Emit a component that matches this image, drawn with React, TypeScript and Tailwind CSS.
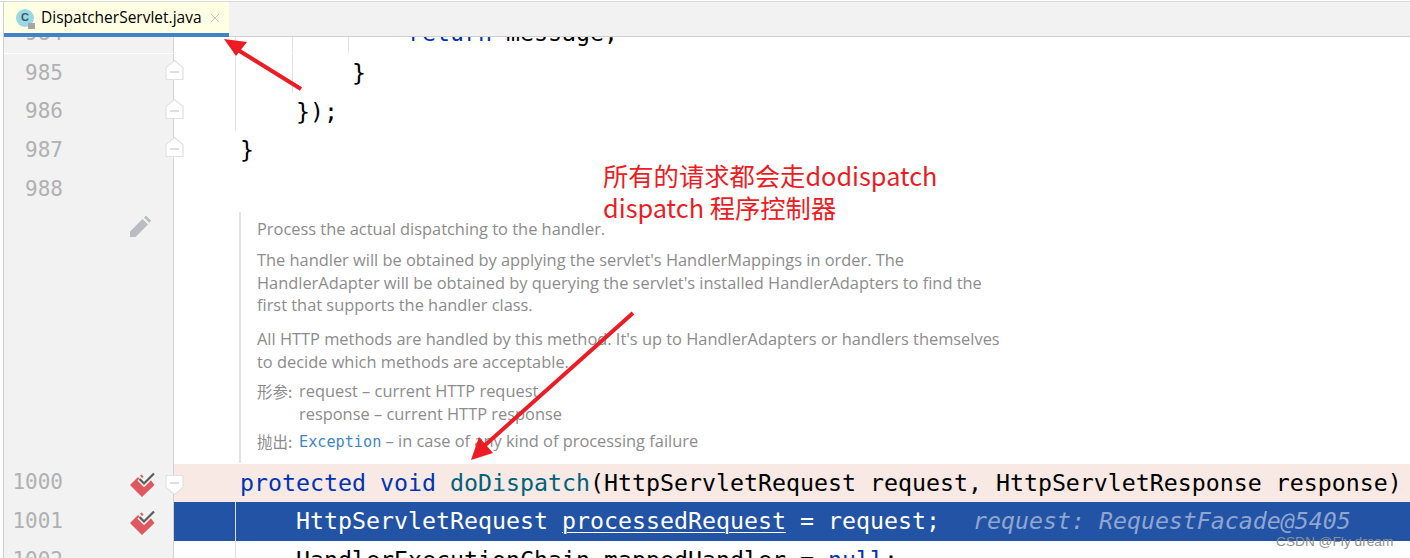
import React from 'react';

const mono = "font-['DejaVu_Sans_Mono',monospace]";

function FoldIcon({ up = true }: { up?: boolean }) {
  return (
    <svg width="19" height="22" viewBox="0 0 19 22" className={`absolute left-[161px] z-10 ${up ? 'top-[5px]' : 'top-[10px]'}`}>
      {up ? (
        <path d="M1 20.5V8.5L9.5 1.5L18 8.5V20.5Z" fill="#ffffff" stroke="#e2e2e2" strokeWidth="1.2" />
      ) : (
        <path d="M1 1.5V13.5L9.5 20.5L18 13.5V1.5Z" fill="#ffffff" stroke="#e2e2e2" strokeWidth="1.2" />
      )}
      <path d={up ? 'M5 13H14' : 'M5 9H14'} stroke="#c9c9c9" strokeWidth="1.2" />
    </svg>
  );
}

function BreakIcon() {
  return (
    <svg width="25" height="25" viewBox="0 0 25 25" className="absolute left-[126px] top-[8px] z-10">
      <path d="M0 13L8 5L14.5 11.5L20 7L24.5 13L12 25Z" fill="#e0585f" />
      <path d="M10 3.5L12 2.5L13.5 5L12 6Z" fill="#e0585f" />
      <path d="M9 7L14 12L24 2" fill="none" stroke="#f2f2f2" strokeWidth="4.5" />
      <path d="M9.5 7L14 11.5L24 1.5" fill="none" stroke="#5c5c5c" strokeWidth="2.2" />
    </svg>
  );
}

function Row({
  num,
  bg = '',
  gutterIcon,
  guides = [],
  children,
}: {
  num?: string;
  bg?: string;
  gutterIcon?: React.ReactNode;
  guides?: number[];
  children?: React.ReactNode;
}) {
  return (
    <div className="relative flex h-[38.6px]">
      <div className="flex w-[170px] shrink-0 items-center bg-[#f2f2f2] border-r border-[#d0d0d0]">
        <span className={`${mono} w-[59px] text-right text-[21px] text-[#b1b1b1]`}>{num}</span>
      </div>
      {gutterIcon}
      <div className={`relative flex flex-1 items-center pl-[66px] whitespace-pre ${mono} text-[23.25px] text-black ${bg}`}>
        {guides.map((g) => (
          <div key={g} className="absolute top-0 bottom-0 w-px bg-[#e3e3e3]" style={{ left: g }} />
        ))}
        {children}
      </div>
    </div>
  );
}

export default function App() {
  return (
    <div className="relative h-[558px] w-[1410px] overflow-hidden bg-white">
      {/* outer window edge */}
      <div className="h-[2px] bg-white border-b border-[#d8d8d8]" />
      <div className="flex h-[556px] flex-col border-l border-[#d0d0d0] ml-[3px]">
        {/* tab bar */}
        <div className="flex h-[35px] shrink-0 bg-[#f2f2f2] border-b border-[#d0d0d0]">
          <div className="flex h-[35px] w-[225px] items-center border-b-[4px] border-[#4083c9] bg-[#ffffe4] pl-[12px]">
            <div className="relative flex h-[18px] w-[18px] items-center justify-center rounded-full bg-[#9ad8e4] font-['Liberation_Sans',sans-serif] text-[11px] font-bold text-[#3c5a62]">
              C
              <div className="absolute bottom-[-2px] right-[-1px] h-[6px] w-[7px] bg-[#a6a6a6]" />
            </div>
            <span className="ml-[7px] font-['Open_Sans',sans-serif] text-[15.5px] text-black">DispatcherServlet.java</span>
            <svg width="10" height="10" viewBox="0 0 10 10" className="ml-[8px]">
              <path d="M1 1L9 9M9 1L1 9" stroke="#c4c4c4" strokeWidth="1" />
            </svg>
          </div>
        </div>

        {/* editor */}
        <div className="flex flex-col">
          <div className="h-[17.3px] overflow-hidden">
            <div className="-mt-[23px]">
              <Row num="984" guides={[61, 118, 174]}>
                <span className="text-[#0033b3]">{'            return '}</span>
                <span>message;</span>
              </Row>
            </div>
          </div>
          <Row num="985" gutterIcon={<FoldIcon />} guides={[61, 118]}>
            {'        }'}
          </Row>
          <Row num="986" gutterIcon={<FoldIcon />} guides={[61]}>
            {'    });'}
          </Row>
          <Row num="987" gutterIcon={<FoldIcon />}>
            {'}'}
          </Row>
          <Row num="988" />

          {/* rendered doc comment */}
          <div className="relative flex h-[255.2px]">
            <div className="flex w-[170px] shrink-0 justify-end bg-[#f2f2f2] border-r border-[#d0d0d0] pt-[6px] pr-[21px]">
              <svg width="23" height="23" viewBox="0 0 23 23">
                <path d="M1 22V16.5L13.5 4L19 9.5L6.5 22Z M15 2.5L17 0.8L22 5.5L20.3 8Z" fill="#b9bdc1" />
              </svg>
            </div>
            <div className="flex-1 pl-[65px] pt-[3px]">
              <div className="h-[251px] border-l-[2px] border-[#e3e3e3] pl-[16px] font-['Open_Sans',sans-serif] text-[16.4px] leading-[22.6px] text-[#8c8c8c] whitespace-nowrap">
                <p className="pt-[6px]">Process the actual dispatching to the handler.</p>
                <p className="mt-[9px]">
                  The handler will be obtained by applying the servlet's HandlerMappings in order. The
                  <br />
                  HandlerAdapter will be obtained by querying the servlet's installed HandlerAdapters to find the
                  <br />
                  first that supports the handler class.
                </p>
                <p className="mt-[11px]">
                  All HTTP methods are handled by this method. It's up to HandlerAdapters or handlers themselves
                  <br />
                  to decide which methods are acceptable.
                </p>
                <div className="mt-[7px] flex">
                  <span className="w-[42px] font-['Noto_Sans_CJK_SC',sans-serif] text-[15.5px]">形参:</span>
                  <div>
                    request – current HTTP request
                    <br />
                    response – current HTTP response
                  </div>
                </div>
                <div className="mt-[5px] flex">
                  <span className="w-[42px] font-['Noto_Sans_CJK_SC',sans-serif] text-[15.5px]">抛出:</span>
                  <span>
                    <span className={`${mono} text-[15.2px] text-[#3f86c7]`}>Exception</span> – in case of any kind of processing failure
                  </span>
                </div>
              </div>
            </div>
          </div>

          <Row num="1000" bg="bg-[#f8e9e5]" gutterIcon={<><BreakIcon /><FoldIcon up={false} /></>}>
            <span className="text-[#0033b3]">protected void </span>
            <span className="text-[#00627a]">doDispatch</span>
            <span>(HttpServletRequest request, HttpServletResponse response)</span>
          </Row>
          <Row num="1001" bg="bg-[#2253a5]" gutterIcon={<BreakIcon />}>
            <div className="absolute top-0 bottom-0 left-[61px] w-px bg-white/80" />
            <span className="text-white">
              {'    HttpServletRequest '}
              <span className="underline decoration-1 underline-offset-[3px]">processedRequest</span>
              {' = request;'}
            </span>
            <span className="ml-[33px] italic text-[#8fa6d1]">request: RequestFacade@5405</span>
          </Row>
          <Row num="1002" guides={[61]}>
            <span>
              {'    HandlerExecutionChain '}
              <span className="underline decoration-1 underline-offset-[3px]">mappedHandler</span>
              {' = '}
              <span className="text-[#0033b3]">null</span>;
            </span>
          </Row>
        </div>
      </div>

      {/* screenshot annotations */}
      <svg width="1410" height="558" viewBox="0 0 1410 558" className="absolute inset-0 z-20 pointer-events-none">
        <path d="M301 89L238 50" stroke="#ed1c24" strokeWidth="4" />
        <path d="M224 39L247 42L236 56Z" fill="#ed1c24" />
        <path d="M633 313L483 447" stroke="#ed1c24" strokeWidth="4" />
        <path d="M471 460L479 437L493 453Z" fill="#ed1c24" />
      </svg>
      <div className="absolute left-[603px] top-[159px] z-20 font-['Noto_Sans_CJK_SC',sans-serif] text-[25.3px] leading-[32px] text-[#ed1c24] whitespace-nowrap">
        所有的请求都会走dodispatch
        <br />
        dispatch 程序控制器
      </div>
      <div className="absolute left-[1276px] top-[532px] z-20 font-['Liberation_Sans',sans-serif] text-[13.7px] text-[#8f8f8f] whitespace-nowrap">
        CSDN @Fly dream
      </div>
    </div>
  );
}
